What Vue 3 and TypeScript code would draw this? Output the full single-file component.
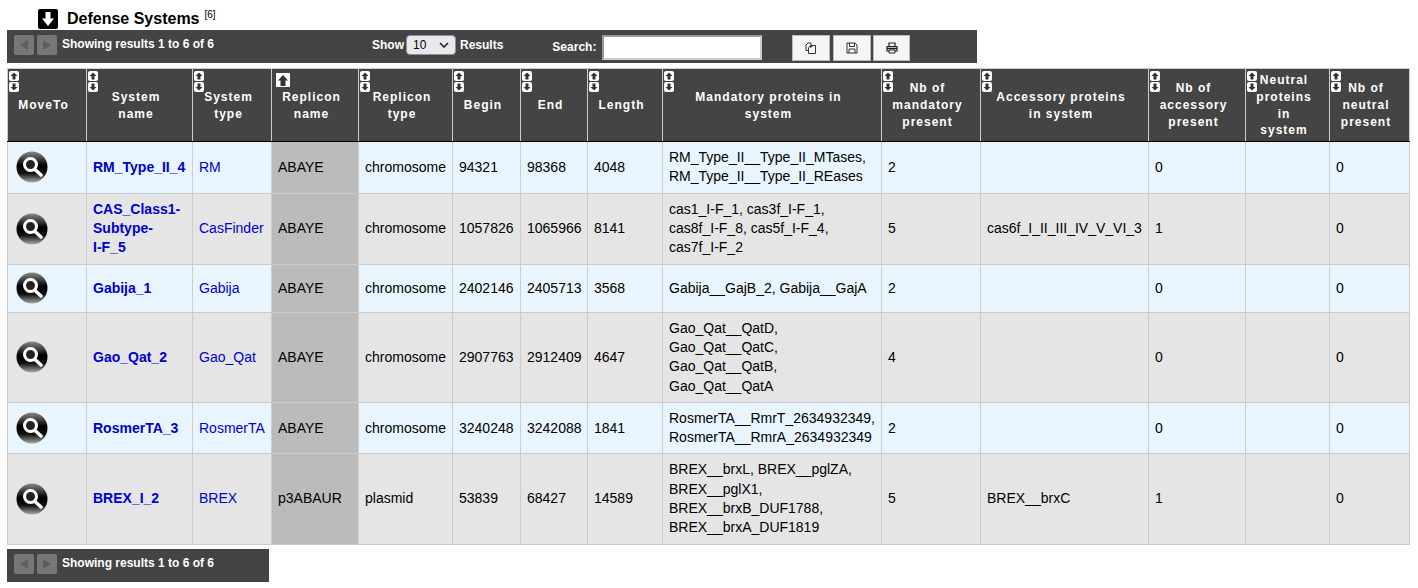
<script setup lang="ts">
type Col = { lines: string[]; width: number; sort?: 'both' | 'up' }
type Row = {
  name: string
  type: string
  replicon: string
  repType: string
  begin: string
  end: string
  length: string
  mandatory: string[]
  nbMandatory: string
  accessory: string
  nbAccessory: string
}

const columns: Col[] = [
  { lines: ['MoveTo'], width: 79 },
  { lines: ['System', 'name'], width: 106 },
  { lines: ['System', 'type'], width: 79 },
  { lines: ['Replicon', 'name'], width: 87, sort: 'up' },
  { lines: ['Replicon', 'type'], width: 94 },
  { lines: ['Begin'], width: 68 },
  { lines: ['End'], width: 67 },
  { lines: ['Length'], width: 75 },
  { lines: ['Mandatory proteins in', 'system'], width: 219 },
  { lines: ['Nb of', 'mandatory', 'present'], width: 99 },
  { lines: ['Accessory proteins', 'in system'], width: 168 },
  { lines: ['Nb of', 'accessory', 'present'], width: 97 },
  { lines: ['Neutral', 'proteins', 'in', 'system'], width: 84 },
  { lines: ['Nb of', 'neutral', 'present'], width: 80 },
]

const rows: Row[] = [
  { name: 'RM_Type_II_4', type: 'RM', replicon: 'ABAYE', repType: 'chromosome', begin: '94321', end: '98368', length: '4048', mandatory: ['RM_Type_II__Type_II_MTases,', 'RM_Type_II__Type_II_REases'], nbMandatory: '2', accessory: '', nbAccessory: '0' },
  { name: 'CAS_Class1-\nSubtype-\nI-F_5', type: 'CasFinder', replicon: 'ABAYE', repType: 'chromosome', begin: '1057826', end: '1065966', length: '8141', mandatory: ['cas1_I-F_1, cas3f_I-F_1,', 'cas8f_I-F_8, cas5f_I-F_4,', 'cas7f_I-F_2'], nbMandatory: '5', accessory: 'cas6f_I_II_III_IV_V_VI_3', nbAccessory: '1' },
  { name: 'Gabija_1', type: 'Gabija', replicon: 'ABAYE', repType: 'chromosome', begin: '2402146', end: '2405713', length: '3568', mandatory: ['Gabija__GajB_2, Gabija__GajA'], nbMandatory: '2', accessory: '', nbAccessory: '0' },
  { name: 'Gao_Qat_2', type: 'Gao_Qat', replicon: 'ABAYE', repType: 'chromosome', begin: '2907763', end: '2912409', length: '4647', mandatory: ['Gao_Qat__QatD,', 'Gao_Qat__QatC,', 'Gao_Qat__QatB,', 'Gao_Qat__QatA'], nbMandatory: '4', accessory: '', nbAccessory: '0' },
  { name: 'RosmerTA_3', type: 'RosmerTA', replicon: 'ABAYE', repType: 'chromosome', begin: '3240248', end: '3242088', length: '1841', mandatory: ['RosmerTA__RmrT_2634932349,', 'RosmerTA__RmrA_2634932349'], nbMandatory: '2', accessory: '', nbAccessory: '0' },
  { name: 'BREX_I_2', type: 'BREX', replicon: 'p3ABAUR', repType: 'plasmid', begin: '53839', end: '68427', length: '14589', mandatory: ['BREX__brxL, BREX__pglZA,', 'BREX__pglX1,', 'BREX__brxB_DUF1788,', 'BREX__brxA_DUF1819'], nbMandatory: '5', accessory: 'BREX__brxC', nbAccessory: '1' },
]
</script>

<template>
  <div class="page">
    <h2 class="title">
      <svg class="title-icon" viewBox="0 0 20 20">
        <rect width="20" height="20" rx="2" fill="#000" />
        <path d="M7.500 3h5v6.500h3.500L10 17 4 9.500h3.500z" fill="#fff" />
      </svg>
      <span>Defense Systems</span>
      <sup>[6]</sup>
    </h2>

    <div class="toolbar top">
      <div class="pager">
        <button class="nav"><i class="tri left"></i></button>
        <button class="nav"><i class="tri right"></i></button>
        <span class="info">Showing results 1 to 6 of 6</span>
      </div>
      <div class="show">
        <span>Show</span>
        <span class="fake-select">10
          <svg viewBox="0 0 10 6" width="10" height="6"><path d="M1 1l4 4 4-4" fill="none" stroke="#222" stroke-width="1.6" /></svg>
        </span>
        <span>Results</span>
      </div>
      <label class="search">
        <span>Search:</span>
        <input type="text" />
      </label>
      <div class="actions">
        <button class="act">
          <svg viewBox="0 0 12 12" width="12" height="12"><path d="M3.500 8.500H1V3l2-2h3v2M6 3.500h2l-2.500 2V3.500M5.500 3.500h5v8H3.500v-6l2-2z" fill="none" stroke="#333" /></svg>
        </button>
        <button class="act">
          <svg viewBox="0 0 12 12" width="12" height="12"><path d="M1 1h8l2 2v8H1zM3.500 1v3.500h5V1M3 11V7h6v4" fill="none" stroke="#333" /></svg>
        </button>
        <button class="act last">
          <svg viewBox="0 0 12 12" width="12" height="12"><path d="M3 4V1h6v3M3 9H1V4.500h10V9H9" fill="none" stroke="#222" stroke-width="1.2" /><path d="M1 6.500h10" stroke="#222" stroke-width="1.500" /><path d="M3 8h6v3H3z" fill="none" stroke="#222" /></svg>
        </button>
      </div>
    </div>

    <table class="grid">
      <colgroup>
        <col v-for="c in columns" :key="c.lines.join()" :style="{ width: c.width + 'px' }" />
      </colgroup>
      <thead>
        <tr>
          <th v-for="c in columns" :key="c.lines.join()">
            <span v-if="c.sort === 'up'" class="sort-big">
              <svg viewBox="0 0 14 14" width="14" height="14">
                <rect width="14" height="14" fill="#fff" />
                <path d="M7 2l5 5.500H9.500V13h-5V7.500H2z" fill="#333" />
              </svg>
            </span>
            <span v-else class="sort">
              <svg viewBox="0 0 10 10" width="10" height="10">
                <rect width="10" height="10" rx="2" fill="#fff" />
                <path d="M5 1.500l3.500 3.500H6.500v3.500h-3V5H1.500z" fill="#333" />
              </svg>
              <svg viewBox="0 0 10 10" width="10" height="10">
                <rect width="10" height="10" rx="2" fill="#fff" />
                <path d="M3.500 1.500h3V5h2L5 8.500 1.500 5h2z" fill="#333" />
              </svg>
            </span>
            <div v-for="l in c.lines" :key="l">{{ l }}</div>
          </th>
        </tr>
      </thead>
      <tbody>
        <tr v-for="r in rows" :key="r.name">
          <td class="move">
            <svg class="lens" viewBox="0 0 32 32" width="32" height="32">
              <defs>
                <linearGradient id="ball" x1="0" y1="0" x2="0" y2="1">
                  <stop offset="0" stop-color="#888" />
                  <stop offset="0.45" stop-color="#000" />
                  <stop offset="0.7" stop-color="#111" />
                  <stop offset="1" stop-color="#aaa" />
                </linearGradient>
              </defs>
              <circle cx="16" cy="16" r="15.500" fill="url(#ball)" />
              <circle cx="14.500" cy="13.500" r="6" fill="#222" stroke="#fff" stroke-width="3" />
              <path d="M19 18.500l6 5.500" stroke="#fff" stroke-width="3.500" stroke-linecap="round" />
            </svg>
          </td>
          <td><a class="link name">{{ r.name }}</a></td>
          <td><a class="link">{{ r.type }}</a></td>
          <td class="rep">{{ r.replicon }}</td>
          <td>{{ r.repType }}</td>
          <td>{{ r.begin }}</td>
          <td>{{ r.end }}</td>
          <td>{{ r.length }}</td>
          <td><div v-for="m in r.mandatory" :key="m">{{ m }}</div></td>
          <td>{{ r.nbMandatory }}</td>
          <td>{{ r.accessory }}</td>
          <td>{{ r.nbAccessory }}</td>
          <td></td>
          <td>0</td>
        </tr>
      </tbody>
    </table>

    <div class="toolbar bottom">
      <div class="pager">
        <button class="nav"><i class="tri left"></i></button>
        <button class="nav"><i class="tri right"></i></button>
        <span class="info">Showing results 1 to 6 of 6</span>
      </div>
    </div>
  </div>
</template>

<style scoped>
.page {
  width: 1418px;
  height: 588px;
  overflow: hidden;
  box-sizing: border-box;
  padding: 9px 0 0 7px;
  font-family: "Liberation Sans", Arial, sans-serif;
  font-size: 14px;
  color: #000;
}
.title {
  display: flex;
  align-items: center;
  height: 20px;
  margin: 0 0 1px 31px;
  font-size: 16px;
  line-height: 20px;
  font-weight: bold;
}
.title-icon {
  width: 20px;
  height: 20px;
  margin-right: 9px;
}
.title sup {
  font-size: 10px;
  font-weight: normal;
  line-height: 10px;
  margin: -8px 0 0 5px;
}
.toolbar {
  display: flex;
  height: 33px;
  background: #444;
  color: #fff;
  font-size: 12px;
  font-weight: bold;
}
.toolbar.top { width: 970px; }
.toolbar.bottom { width: 262px; margin-top: 4px; }
.pager {
  display: flex;
  padding: 5px 0 0 7px;
  width: 358px;
  box-sizing: border-box;
}
.nav {
  width: 20px;
  height: 20px;
  padding: 0;
  margin-right: 3px;
  border: 0;
  border-radius: 2px;
  background: #777;
  display: flex;
  align-items: center;
  justify-content: center;
}
.tri {
  display: block;
  border-top: 5px solid transparent;
  border-bottom: 5px solid transparent;
}
.tri.left { border-right: 8px solid #5e5e5e; }
.tri.right { border-left: 8px solid #5e5e5e; }
.info {
  margin-left: 2px;
  line-height: 18px;
}
.show {
  display: flex;
  align-items: flex-start;
  padding-top: 5px;
  margin-left: 7px;
  line-height: 20px;
}
.fake-select {
  display: flex;
  align-items: center;
  justify-content: space-between;
  width: 50px;
  height: 20px;
  box-sizing: border-box;
  margin: 0 4px 0 2px;
  padding: 0 6px;
  background: #e9e9ed;
  border: 1px solid #8f8f9d;
  border-radius: 4px;
  color: #000;
  font-weight: normal;
}
.search {
  display: flex;
  align-items: flex-start;
  padding-top: 5px;
  margin-left: 49px;
  line-height: 24px;
}
.search input {
  width: 160px;
  height: 25px;
  box-sizing: border-box;
  margin-left: 6px;
  border: 2px solid #ccc;
  border-top-color: #999;
  border-left-color: #999;
  background: #fff;
  padding: 0;
}
.actions {
  display: flex;
  gap: 3px;
  padding-top: 5px;
  margin-left: 30px;
}
.act {
  width: 38px;
  height: 26px;
  padding: 0;
  box-sizing: border-box;
  background: #f5f5f5;
  border: 1px solid #bbb;
  display: flex;
  align-items: center;
  justify-content: center;
}
.act.last {
  width: 37px;
  margin-left: -1px;
}
.grid {
  table-layout: fixed;
  width: 1402px;
  margin-top: 5px;
  border-collapse: collapse;
}
.grid th {
  position: relative;
  height: 73.2px;
  padding: 1px 7px 0 0;
  box-sizing: border-box;
  background: #444;
  color: #fff;
  border: 1px solid #ccc;
  border-bottom: 1px solid #000;
  font-size: 12px;
  font-weight: bold;
  line-height: 16.8px;
  letter-spacing: 1px;
  text-align: center;
  vertical-align: middle;
}
.sort {
  position: absolute;
  top: 2px;
  left: 1px;
  width: 10px;
}
.sort-big {
  position: absolute;
  top: 4px;
  left: 4px;
}
.sort svg { display: block; margin-bottom: 1px; }
.sort-big svg { display: block; }
.grid td {
  padding: 6px;
  border: 1px solid #ccc;
  line-height: 19.3px;
  vertical-align: middle;
}
.grid tbody tr:nth-child(odd) td { background: #e8f5ff; }
.grid tbody tr:nth-child(even) td { background: #e5e5e5; }
.grid tbody tr td.rep { background: #bbb; }
.grid td.move {
  padding: 7.5px 0 7.5px 8px;
}
.lens {
  display: block;
}
.link { color: #0000cc; }
.name {
  font-weight: bold;
  white-space: pre-line;
}
</style>
